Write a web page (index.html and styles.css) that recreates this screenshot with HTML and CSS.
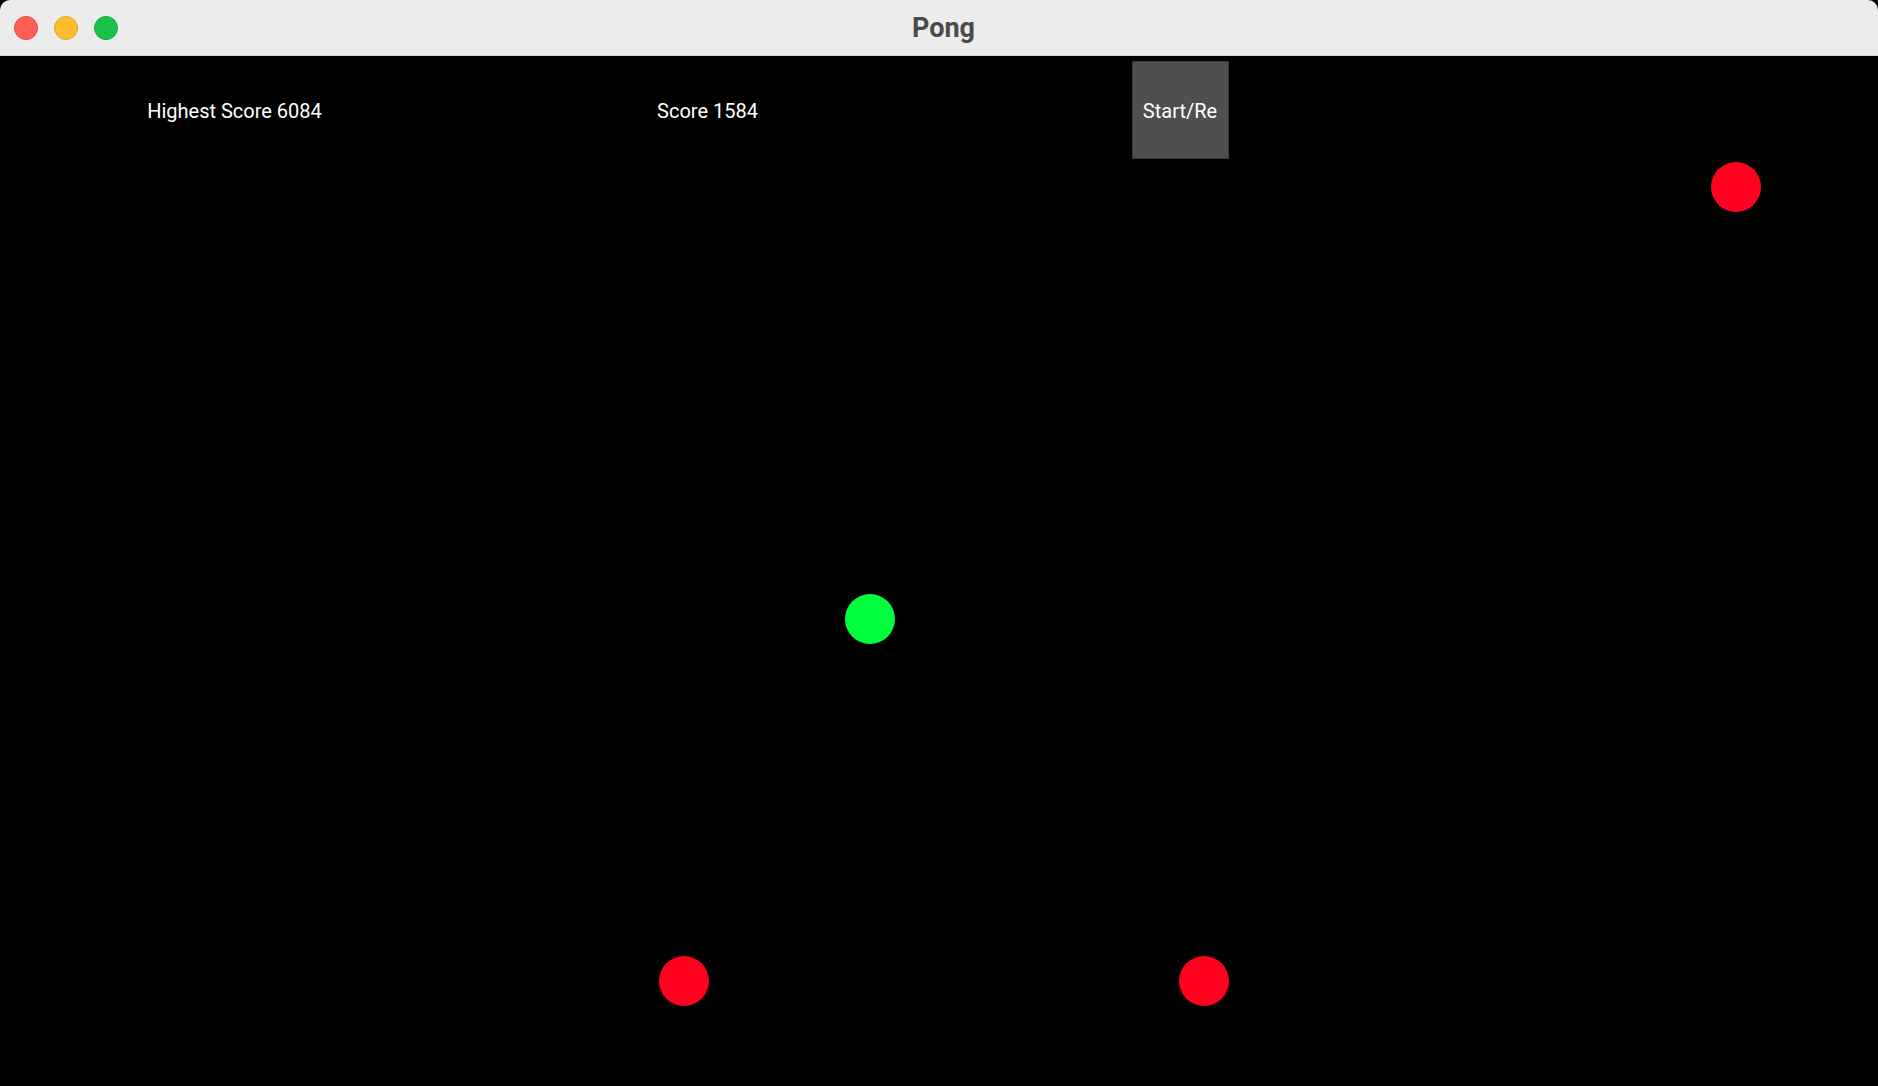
FILE: index.html
```html
<!DOCTYPE html>
<html>
<head>
<meta charset="utf-8">
<title>Pong</title>
<link rel="stylesheet" href="styles.css">
</head>
<body>
<div class="window">
  <div class="titlebar">
    <div class="lights">
      <span class="light red"></span>
      <span class="light yellow"></span>
      <span class="light green"></span>
    </div>
    <div class="title">Pong</div>
  </div>
  <div class="game">
    <div class="hud">
      <div class="cell label">Highest Score 6084</div>
      <div class="cell label">Score 1584</div>
      <div class="cell"><button class="btn">Start/Re</button></div>
      <div class="cell"></div>
    </div>
    <div class="ball red-ball" style="left:1711px; top:106px;"></div>
    <div class="ball green-ball" style="left:845px; top:538px;"></div>
    <div class="ball red-ball" style="left:659px; top:900px;"></div>
    <div class="ball red-ball" style="left:1179px; top:900px;"></div>
  </div>
</div>
</body>
</html>
```
FILE: styles.css
```css
html, body {
  margin: 0;
  padding: 0;
  background: #000;
  width: 1878px;
  height: 1086px;
  overflow: hidden;
  font-family: Roboto, "Liberation Sans", sans-serif;
}
.window {
  display: flex;
  flex-direction: column;
  width: 1878px;
  height: 1086px;
}
.titlebar {
  position: relative;
  height: 55px;
  flex: 0 0 55px;
  background: #ececec;
  border-bottom: 1px solid #d6d6d6;
  border-radius: 10px 10px 0 0;
  display: flex;
  align-items: center;
  justify-content: center;
}
.lights {
  position: absolute;
  left: 14px;
  top: 16px;
  display: flex;
  gap: 16px;
}
.light {
  width: 22px;
  height: 22px;
  border-radius: 50%;
  display: block;
}
.light.red { background: #ff5f57; border: 1px solid #e2463f; }
.light.yellow { background: #febc2e; border: 1px solid #e1a325; }
.light.green { background: #19c34a; border: 1px solid #13a73b; }
.title {
  font-weight: 700;
  font-size: 27px;
  color: #4a4a4a;
  margin-left: 9px;
}
.game {
  position: relative;
  flex: 1;
  background: #000;
}
.hud {
  display: grid;
  grid-template-columns: 469px 477px 468px 1fr;
  align-items: center;
  justify-items: center;
  padding-top: 5px;
  color: #fff;
  font-size: 20px;
}
.label {
  padding-top: 2px;
}
.btn {
  width: 97px;
  height: 98px;
  background: #4f4f4f;
  border: 1px solid #3a3a3a;
  color: #fff;
  font-family: Roboto, "Liberation Sans", sans-serif;
  font-size: 20px;
  padding: 2px 0 0 0;
  margin: 0;
}
.ball {
  position: absolute;
  width: 50px;
  height: 50px;
  border-radius: 50%;
}
.red-ball { background: #ff001e; }
.green-ball { background: #00ff3c; }
```
